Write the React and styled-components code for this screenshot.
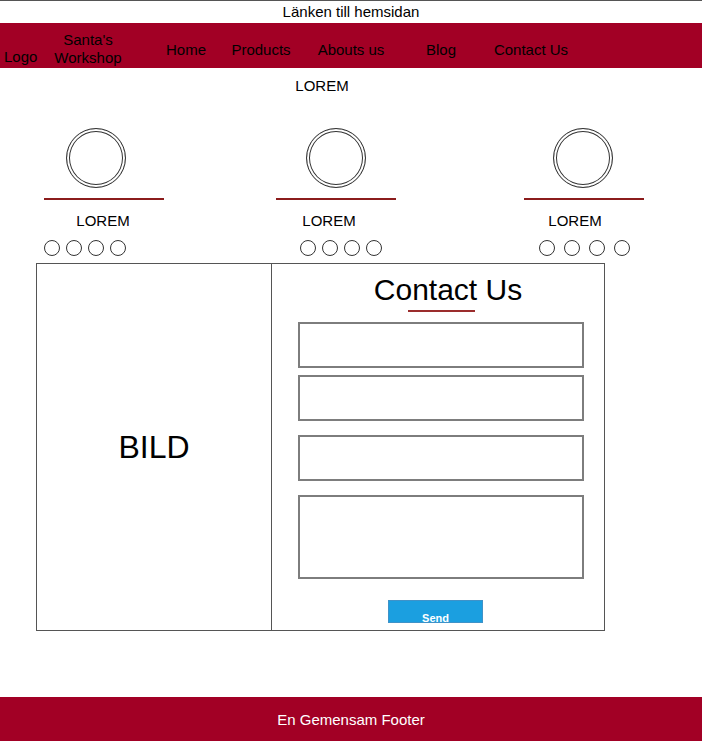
import styled, { createGlobalStyle } from "styled-components";

const GlobalStyle = createGlobalStyle`
  body {
    margin: 0;
    font-family: "Liberation Sans", Arial, sans-serif;
    color: #000;
    background: #fff;
  }
`;

// wireframe columns, each a bit off-centre like the sketch
const features = [
  { id: 1, gap: 44, ring: -8, label: -1, dots: -19, dotGap: 6 },
  { id: 2, gap: 112, ring: 0, label: -7, dots: 5, dotGap: 6 },
  { id: 3, gap: 128, ring: -1, label: -9, dots: 0, dotGap: 9 },
];

const navLinks = [
  { label: "Home", width: 60 },
  { label: "Products", width: 90 },
  { label: "Abouts us", width: 90 },
  { label: "Blog", width: 90 },
  { label: "Contact Us", width: 90 },
];

const App = () => {
  return (
    <Page>
      <GlobalStyle />
      <TopLink>Länken till hemsidan</TopLink>
      <NavBar>
        <Logo>Logo</Logo>
        <Brand>
          Santa's
          <br />
          Workshop
        </Brand>
        <NavList>
          {navLinks.map((link) => (
            <NavItem key={link.label} $width={link.width}>
              {link.label}
            </NavItem>
          ))}
        </NavList>
      </NavBar>

      <Main>
        <Heading>LOREM</Heading>
        <Features>
          {features.map((f) => (
            <Feature key={f.id} $gap={f.gap}>
              <Ring $shift={f.ring} />
              <RedLine />
              <Label $shift={f.label}>LOREM</Label>
              <Dots $shift={f.dots} $gap={f.dotGap}>
                {[0, 1, 2, 3].map((d) => (
                  <Dot key={d} />
                ))}
              </Dots>
            </Feature>
          ))}
        </Features>

        <ContactBox>
          <Picture>BILD</Picture>
          <FormPane>
            <FormTitle>Contact Us</FormTitle>
            <TitleLine />
            <Field $mt={10} $mb={7} />
            <Field $mb={14} />
            <Field $mb={14} />
            <Field as="textarea" $height={84} $mb={21} />
            <SendButton type="button">Send</SendButton>
          </FormPane>
        </ContactBox>
      </Main>

      <Footer>En Gemensam Footer</Footer>
    </Page>
  );
};

const Page = styled.div`
  min-height: 100vh;
  display: flex;
  flex-direction: column;
`;

const TopLink = styled.div`
  height: 22px;
  border-top: 1px solid #555;
  text-align: center;
  font-size: 15px;
  line-height: 22px;
`;

const NavBar = styled.nav`
  height: 45px;
  background: #a20025;
  display: flex;
  align-items: flex-start;
  font-size: 15px;
  line-height: 18px;
`;

const Logo = styled.div`
  width: 46px;
  padding: 25px 0 0 4px;
`;

const Brand = styled.div`
  width: 76px;
  padding-top: 8px;
  text-align: center;
`;

const NavList = styled.div`
  display: flex;
  margin-left: 30px;
  padding-top: 18px;
`;

const NavItem = styled.a`
  width: ${(p) => p.$width}px;
  text-align: center;
  color: #000;
  cursor: pointer;
`;

const Main = styled.main`
  width: 644px;
  padding-bottom: 40px;
`;

const Heading = styled.h2`
  margin: 0;
  padding-top: 9px;
  text-align: center;
  font-size: 15px;
  font-weight: normal;
  line-height: 18px;
`;

const Features = styled.section`
  display: flex;
  margin-top: 33px;
`;

const Feature = styled.div`
  width: 120px;
  margin-left: ${(p) => p.$gap}px;
  display: flex;
  flex-direction: column;
  align-items: center;
`;

const Ring = styled.div`
  width: 58px;
  height: 58px;
  margin-left: ${(p) => p.$shift * 2}px;
  border: 1px solid #333;
  border-radius: 50%;
  box-shadow: inset 0 0 0 2px #fff, inset 0 0 0 3px #333;
`;

const RedLine = styled.div`
  width: 120px;
  height: 2px;
  background: #8b1c1c;
  margin-top: 10px;
`;

const Label = styled.div`
  margin: 12px 0 0 ${(p) => p.$shift * 2}px;
  font-size: 15px;
  line-height: 18px;
  white-space: nowrap;
`;

const Dots = styled.div`
  display: flex;
  gap: ${(p) => p.$gap}px;
  margin: 10px 0 0 ${(p) => p.$shift * 2}px;
`;

const Dot = styled.span`
  width: 14px;
  height: 14px;
  border: 1px solid #333;
  border-radius: 50%;
`;

const ContactBox = styled.section`
  display: flex;
  width: 567px;
  height: 366px;
  margin: 7px 0 0 36px;
  border: 1px solid #555;
`;

const Picture = styled.div`
  width: 234px;
  border-right: 1px solid #555;
  display: flex;
  align-items: center;
  justify-content: center;
  font-size: 32px;
`;

const FormPane = styled.form`
  flex: 1;
  padding: 9px 0 0 26px;
  width: 286px;
  display: flex;
  flex-direction: column;
  align-items: flex-start;
`;

const FormTitle = styled.h1`
  width: 286px;
  margin: 0;
  text-align: center;
  font-size: 30px;
  font-weight: normal;
  line-height: 34px;
  padding-left: 14px;
  box-sizing: border-box;
`;

const TitleLine = styled.div`
  width: 67px;
  height: 2px;
  background: #9b2d2d;
  margin: 3px 0 0 110px;
`;

const Field = styled.input`
  display: block;
  box-sizing: border-box;
  width: 286px;
  height: ${(p) => p.$height || 46}px;
  margin: ${(p) => p.$mt || 0}px 0 ${(p) => p.$mb}px;
  border: 2px solid #7d7d7d;
  padding: 4px;
  resize: none;
  font-family: inherit;
`;

const SendButton = styled.button`
  box-sizing: border-box;
  width: 95px;
  height: 23px;
  margin-left: 90px;
  padding: 11px 0 0;
  background: #1b9fe0;
  border: 1px solid #3f92c8;
  color: #fff;
  font-family: inherit;
  font-size: 11px;
  font-weight: bold;
  line-height: 12px;
`;

const Footer = styled.footer`
  margin-top: auto;
  height: 44px;
  background: #a20025;
  color: #fff;
  text-align: center;
  font-size: 15px;
  line-height: 46px;
`;

export default App;
